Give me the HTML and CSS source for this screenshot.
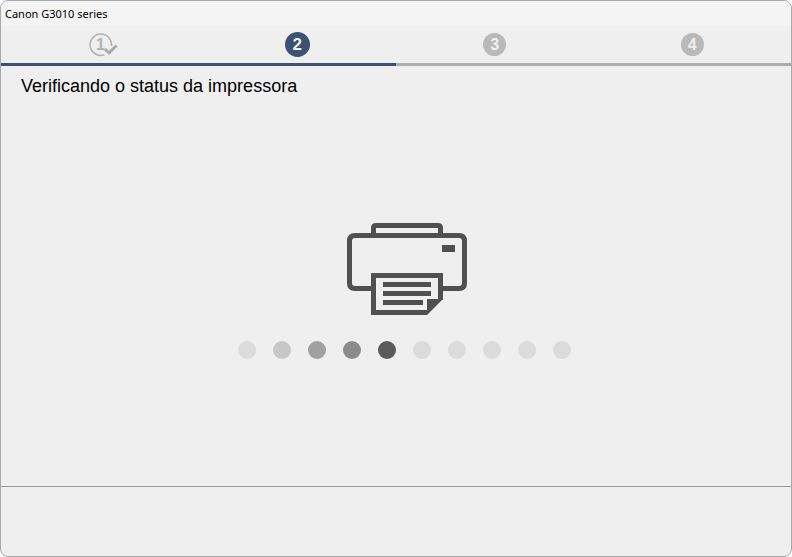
FILE: index.html
```html
<!DOCTYPE html>
<html lang="pt-BR">
<head>
    <meta charset="UTF-8">
    <meta name="viewport" content="width=device-width, initial-scale=1.0">
    <title>Canon G3010 series</title>
    <link rel="stylesheet" href="styles.css">
</head>
<body>
    <div class="window">
        <header class="title-bar">Canon G3010 series</header>

        <!-- Setup steps -->
        <ol class="steps">
            <li class="step">
                <svg class="step-done" width="30" height="26" viewBox="0 0 30 26" role="img" aria-label="1">
                    <path d="M22.4 14A10.7 10.7 0 1 0 15.5 22.7" fill="none" stroke="#b2b2b2" stroke-width="1.5"/>
                    <text x="11.5" y="18" text-anchor="middle" class="step-done-number">1</text>
                    <path d="M16 17L20 21L27.5 13.5" fill="none" stroke="#a9a9a9" stroke-width="3"/>
                </svg>
            </li>
            <li class="step"><span class="step-number current">2</span></li>
            <li class="step"><span class="step-number">3</span></li>
            <li class="step"><span class="step-number">4</span></li>
        </ol>
        <div class="progress-bar">
            <div class="progress-fill"></div>
        </div>

        <!-- Status -->
        <main class="content">
            <h1 class="status">Verificando o status da impressora</h1>
            <div class="activity">
                <svg class="printer" width="120" height="92" viewBox="0 0 120 92" aria-hidden="true">
                    <g fill="none" stroke="#505050" stroke-width="5">
                        <path d="M26.5 12V5Q26.5 2.5 29 2.5H91Q93.5 2.5 93.5 5V12"/>
                        <path d="M25 65.5H8Q2.5 65.5 2.5 60V18Q2.5 12.5 8 12.5H112Q117.5 12.5 117.5 18V60Q117.5 65.5 112 65.5H95"/>
                        <path d="M93.5 77V52.5H26.5V89.5H80"/>
                    </g>
                    <path d="M80 76H96L80 92Z" fill="#505050"/>
                    <path d="M95 22H108V29H95ZM36 59H84V64H36ZM36 68H84V73H36ZM36 77H76V82H36Z" fill="#505050"/>
                </svg>
                <div class="dots">
                    <span class="dot"></span>
                    <span class="dot trail-3"></span>
                    <span class="dot trail-2"></span>
                    <span class="dot trail-1"></span>
                    <span class="dot lead"></span>
                    <span class="dot"></span>
                    <span class="dot"></span>
                    <span class="dot"></span>
                    <span class="dot"></span>
                    <span class="dot"></span>
                </div>
            </div>
        </main>

        <footer class="footer"></footer>
    </div>
</body>
</html>
```
FILE: styles.css
```css
* {
    margin: 0;
    padding: 0;
    box-sizing: border-box;
}

body {
    font-family: "Liberation Sans", Arial, sans-serif;
    background: #fff;
    color: #000;
}

.window {
    display: flex;
    flex-direction: column;
    min-height: 100vh;
    background: #efefef;
    border: 1px solid #a9a9a9;
    border-radius: 8px;
    overflow: hidden;
}

.title-bar {
    padding: 0 4px;
    background: #f3f3f3;
    font-family: "Noto Sans", "Open Sans", sans-serif;
    font-size: 11px;
    line-height: 25px;
}

.steps {
    display: flex;
    height: 37px;
    list-style: none;
}

.step {
    flex: 1;
    display: flex;
    align-items: center;
    justify-content: center;
}

.step-number {
    width: 23px;
    border-radius: 50%;
    background: #b9b9b9;
    color: #efefef;
    font-size: 16px;
    font-weight: bold;
    line-height: 23px;
    text-align: center;
}

.step-number.current {
    width: 25px;
    background: #3f5172;
    font-size: 17px;
    line-height: 25px;
}

.step-done {
    margin-left: 8px;
}

.step-done-number {
    fill: #b2b2b2;
    font-size: 16px;
    font-weight: bold;
}

.progress-bar {
    height: 3px;
    background: #adadad;
}

.progress-fill {
    width: 50%;
    height: 100%;
    background: #3f5172;
}

.content {
    flex: 1;
    padding: 10px 20px;
}

.status {
    font-size: 18px;
    font-weight: normal;
    line-height: 20px;
}

.activity {
    display: flex;
    flex-direction: column;
    align-items: center;
    gap: 26px;
    padding: 127px 0 0 16px;
}

.printer {
    margin-left: 6px;
}

.dots {
    display: flex;
    gap: 17px;
}

.dot {
    width: 18px;
    height: 18px;
    border-radius: 50%;
    background: #dbdbdb;
}

.dot.trail-3 {
    background: #c7c7c7;
}

.dot.trail-2 {
    background: #a0a0a0;
}

.dot.trail-1 {
    background: #8c8c8c;
}

.dot.lead {
    background: #5a5a5a;
}

.footer {
    height: 70px;
    border-top: 1px solid #999;
}
```
